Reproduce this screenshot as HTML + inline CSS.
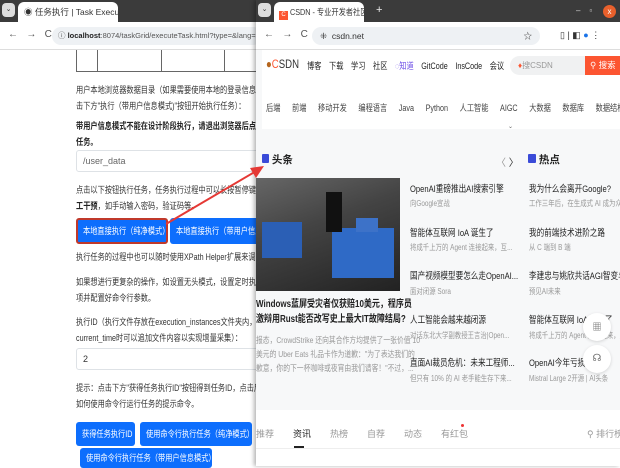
<!DOCTYPE html>
<html><head><meta charset="utf-8"><style>
*{margin:0;padding:0;box-sizing:border-box}
body{width:620px;height:466px;overflow:hidden;position:relative;background:#fff;font-family:"Liberation Sans","Noto Sans CJK SC",sans-serif;font-size:9px;color:#333}
.a{position:absolute;white-space:nowrap}
.s{transform:scaleX(.8);transform-origin:0 0}
.btn{position:absolute;background:#0d6efd;color:#fff;border-radius:3px;font-size:9px;line-height:24px;padding:0 6px;overflow:hidden;white-space:nowrap}
.btn span{display:inline-block;transform:scaleX(.8);transform-origin:0 50%}
.g{color:#999;font-size:8px}
.t{font-size:9.5px;color:#222}
</style></head><body>
<div class="a" style="left:0;top:0;width:260px;height:22px;background:#3b3b3b"></div>
<div class="a" style="left:2px;top:3px;width:13px;height:14px;background:#ddd;border-radius:4px;font-size:7px;text-align:center;line-height:14px">⌄</div>
<div class="a" style="left:18px;top:2px;width:100px;height:20px;background:#fff;border-radius:6px 6px 0 0;font-size:8.5px;line-height:20px;padding-left:6px;overflow:hidden">◉ 任务执行 | Task Executio&nbsp;×</div>
<div class="a" style="left:0;top:22px;width:260px;height:28px;background:#fff;border-bottom:1px solid #ddd"></div>
<div class="a" style="left:8px;top:29px;font-size:10px;color:#555">←&nbsp;&nbsp;&nbsp;→&nbsp;&nbsp;&nbsp;C</div>
<div class="a" style="left:52px;top:27px;width:210px;height:18px;background:#eef1f4;border-radius:9px;font-size:7.5px;line-height:18px;padding-left:6px;color:#555">ⓘ <b style="color:#222">localhost</b>:8074/taskGrid/executeTask.html?type=&amp;lang=zh&amp;id=324&amp;w</div>
<div class="a" style="left:76px;top:50px;width:190px;height:22px;border-left:1px solid #666;border-bottom:1px solid #666"></div>
<div class="a" style="left:97px;top:50px;width:1px;height:22px;background:#666"></div>
<div class="a" style="left:161px;top:50px;width:1px;height:22px;background:#666"></div>
<div class="a" style="left:224px;top:50px;width:1px;height:22px;background:#666"></div>
<div class="a s" style="left:76px;top:82px;line-height:16px">用户本地浏览器数据目录（如果需要使用本地的登录信息，请<br>击下方"执行（带用户信息模式)"按钮开始执行任务）：</div>
<div class="a s" style="left:76px;top:118px;line-height:16px;font-weight:bold;color:#222">带用户信息模式不能在设计阶段执行，请退出浏览器后点击"<br>任务。</div>
<div class="a" style="left:76px;top:150px;width:190px;height:22px;border:1px solid #dee2e6;border-radius:3px;font-size:9px;line-height:20px;padding-left:6px;color:#666">/user_data</div>
<div class="a s" style="left:76px;top:182px;line-height:16px">点击以下按钮执行任务，任务执行过程中可以长按暂停键（系<br><b style="color:#222">工干预</b>，如手动输入密码，验证码等。</div>
<div class="btn" style="left:76px;top:218px;width:92px;height:26px;border:2px solid #c0392b;line-height:22px;padding:0 5px"><span>本地直接执行（纯净模式）</span></div>
<div class="btn" style="left:170px;top:218px;width:90px;height:26px;line-height:26px"><span>本地直接执行（带用户信息</span></div>
<div class="a s" style="left:76px;top:250px">执行任务的过程中也可以随时使用XPath Helper扩展来调试XPath</div>
<div class="a s" style="left:76px;top:274px;line-height:16px">如果想进行更复杂的操作，如设置无头模式，设置定时执行等<br>项并配置好命令行参数。</div>
<div class="a s" style="left:76px;top:314px;line-height:16px">执行ID（执行文件存放在execution_instances文件夹内，提醒<br>current_time时可以追加文件内容以实现增量采集）：</div>
<div class="a" style="left:76px;top:348px;width:190px;height:22px;border:1px solid #dee2e6;border-radius:3px;font-size:9px;line-height:20px;padding-left:6px">2</div>
<div class="a s" style="left:76px;top:380px;line-height:16px">提示：点击下方"获得任务执行ID"按钮得到任务ID，点击后面<br>如何使用命令行运行任务的提示命令。</div>
<div class="btn" style="left:76px;top:422px;width:59px"><span>获得任务执行ID</span></div>
<div class="btn" style="left:140px;top:422px;width:112px"><span>使用命令行执行任务（纯净模式）</span></div>
<div class="btn" style="left:80px;top:448px;width:132px;height:20px;line-height:20px"><span>使用命令行执行任务（带用户信息模式）</span></div>
<div class="a" style="left:256px;top:0;width:364px;height:466px;background:#f7f8f9;box-shadow:-2px 0 4px rgba(0,0,0,.3)"></div>
<div class="a" style="left:256px;top:0;width:364px;height:22px;background:#3b3b3b"></div>
<div class="a" style="left:258px;top:3px;width:13px;height:14px;background:#ddd;border-radius:4px;font-size:7px;text-align:center;line-height:14px">⌄</div>
<div class="a" style="left:274px;top:2px;width:90px;height:20px;background:#fff;border-radius:6px 6px 0 0;font-size:8.5px;line-height:20px;padding-left:5px;overflow:hidden"><span style="display:inline-block;width:9px;height:9px;background:#fc5531;color:#fff;font-size:6px;line-height:9px;text-align:center;vertical-align:-1px">C</span> <span style="display:inline-block;transform:scaleX(.85);transform-origin:0 50%">CSDN - 专业开发者社区&nbsp;&nbsp;×</span></div>
<div class="a" style="left:376px;top:4px;color:#eee;font-size:11px">+</div>
<div class="a" style="left:576px;top:6px;color:#ddd;font-size:8px">–&nbsp;&nbsp;&nbsp;&nbsp;▫</div>
<div class="a" style="left:603px;top:5px;width:13px;height:13px;border-radius:50%;background:#e8602c;color:#fff;font-size:8px;text-align:center;line-height:13px">x</div>
<div class="a" style="left:256px;top:22px;width:364px;height:28px;background:#fff;border-bottom:1px solid #ddd"></div>
<div class="a" style="left:264px;top:29px;font-size:10px;color:#555">←&nbsp;&nbsp;&nbsp;→&nbsp;&nbsp;&nbsp;C</div>
<div class="a" style="left:312px;top:27px;width:228px;height:18px;background:#eef1f4;border-radius:9px;font-size:8.5px;line-height:18px;padding-left:8px;color:#333">⁜&nbsp; csdn.net<span style="float:right;padding-right:8px">☆</span></div>
<div class="a" style="left:560px;top:30px;font-size:9px;color:#333">▯&nbsp;|&nbsp;◧&nbsp;<span style="color:#1a73e8">●</span>&nbsp;⋮</div>
<div class="a" style="left:262px;top:50px;width:358px;height:30px;background:#fff"></div>
<div class="a s" style="left:266px;top:57px;font-size:12px"><span style="color:#b5651d">●</span><span style="color:#fc5531">C</span>SDN</div>
<div class="a s" style="left:307px;top:59px;font-size:9px;color:#222;word-spacing:7px">博客 下载 学习 社区 <span style="color:#6b4ce6">◌知道</span> GitCode InsCode 会议</div>
<div class="a" style="left:510px;top:56px;width:80px;height:19px;background:#f0f1f2;border-radius:10px 0 0 10px;font-size:8px;line-height:19px;padding-left:8px;color:#999"><span style="color:#fc5531">♦</span>搜CSDN</div>
<div class="a" style="left:585px;top:56px;width:35px;height:19px;background:#fc5531;color:#fff;font-size:8.5px;line-height:19px;padding-left:5px">⚲ 搜索</div>
<div class="a" style="left:262px;top:80px;width:358px;height:49px;background:#fff"></div>
<div class="a s" style="left:266px;top:101px;font-size:9px;color:#444;word-spacing:12px">后端 前端 移动开发 编程语言 Java Python 人工智能 AIGC 大数据 数据库 数据结构与</div>
<div class="a" style="left:508px;top:123px;font-size:6px;color:#666">⌄</div>
<div class="a" style="left:262px;top:152px;font-size:10.5px;font-weight:bold;color:#222"><span style="display:inline-block;width:7px;height:9px;background:#3a4bd8;border-radius:1px"></span> 头条</div>
<div class="a" style="left:496px;top:154px;font-size:10px;color:#999">〈 <span style="color:#333">〉</span></div>
<div class="a" style="left:528px;top:152px;font-size:10.5px;font-weight:bold;color:#222"><span style="display:inline-block;width:8px;height:9px;background:#3a4bd8;border-radius:1px"></span> 热点</div>
<div class="a" style="left:256px;top:178px;width:144px;height:113px;background:linear-gradient(160deg,#666 0%,#444 40%,#222 100%)"></div>
<div class="a" style="left:262px;top:222px;width:40px;height:36px;background:#2b5fb5"></div>
<div class="a" style="left:332px;top:228px;width:62px;height:50px;background:#2f6ac6"></div>
<div class="a" style="left:356px;top:218px;width:22px;height:14px;background:#3d72c8"></div>
<div class="a" style="left:326px;top:192px;width:16px;height:40px;background:#111"></div>
<div class="a s" style="left:256px;top:297px;line-height:15px;font-size:10px;font-weight:bold;color:#222">Windows蓝屏受灾者仅获赔10美元，程序员<br>激辩用Rust能否改写史上最大IT故障结局?</div>
<div class="a g s" style="left:256px;top:333px;line-height:14px;font-size:8.5px">报态，CrowdStrike 还向其合作方均提供了一张价值 10<br>美元的 Uber Eats 礼品卡作为道歉："为了表达我们的<br>歉意，你的下一杯咖啡或夜宵由我们请客！"不过，...</div>
<div class="a t s" style="left:410px;top:181px">OpenAI重磅推出AI搜索引擎</div><div class="a g s" style="left:410px;top:198px">向Google宣战</div>
<div class="a t s" style="left:410px;top:225px">智能体互联网 IoA 诞生了</div><div class="a g s" style="left:410px;top:242px">将成千上万的 Agent 连接起来，互...</div>
<div class="a t s" style="left:410px;top:268px">国产视频模型要怎么走OpenAI...</div><div class="a g s" style="left:410px;top:286px">面对闭源 Sora</div>
<div class="a t s" style="left:410px;top:312px">人工智能会越来越闭源</div><div class="a g s" style="left:410px;top:330px">对话东北大学副教授王言治|Open...</div>
<div class="a t s" style="left:410px;top:355px">直面AI裁员危机：未来工程师...</div><div class="a g s" style="left:410px;top:373px">但只有 10% 的 AI 老手能生存下来...</div>
<div class="a t s" style="left:529px;top:181px">我为什么会离开Google?</div><div class="a g s" style="left:529px;top:198px">工作三年后，在生成式 AI 成为众</div>
<div class="a t s" style="left:529px;top:225px">我的前端技术进阶之路</div><div class="a g s" style="left:529px;top:242px">从 C 端到 B 端</div>
<div class="a t s" style="left:529px;top:268px">李建忠与姚欣共话AGI智变与</div><div class="a g s" style="left:529px;top:286px">预见AI未来</div>
<div class="a t s" style="left:529px;top:312px">智能体互联网 IoA 诞生了</div><div class="a g s" style="left:529px;top:330px">将成千上万的 Agent 连接起来，互</div>
<div class="a t s" style="left:529px;top:355px">OpenAI今年亏损50</div><div class="a g s" style="left:529px;top:373px">Mistral Large 2开源 | AI头条</div>
<div class="a" style="left:583px;top:313px;width:28px;height:28px;border-radius:50%;background:#fff;box-shadow:0 1px 3px rgba(0,0,0,.15);font-size:9px;text-align:center;line-height:28px;color:#666">▦</div>
<div class="a" style="left:583px;top:345px;width:28px;height:28px;border-radius:50%;background:#fff;box-shadow:0 1px 3px rgba(0,0,0,.15);font-size:10px;text-align:center;line-height:28px;color:#666">☊</div>
<div class="a" style="left:256px;top:410px;width:364px;height:56px;background:#fff"></div>
<div class="a" style="left:256px;top:427px;font-size:9px;color:#999">推荐</div>
<div class="a" style="left:293px;top:427px;font-size:9px;color:#222">资讯</div>
<div class="a" style="left:330px;top:427px;font-size:9px;color:#999">热榜</div>
<div class="a" style="left:367px;top:427px;font-size:9px;color:#999">自荐</div>
<div class="a" style="left:404px;top:427px;font-size:9px;color:#999">动态</div>
<div class="a" style="left:441px;top:427px;font-size:9px;color:#999">有红包</div>
<div class="a" style="left:461px;top:424px;width:3px;height:3px;border-radius:50%;background:#e33"></div>
<div class="a" style="left:294px;top:446px;width:10px;height:2px;background:#222"></div>
<div class="a" style="left:587px;top:427px;font-size:9px;color:#999">⚲ 排行榜</div>
<div class="a" style="left:256px;top:448px;width:364px;height:1px;background:#eee"></div>
<svg class="a" style="left:0;top:0" width="620" height="466"><line x1="166" y1="224" x2="258" y2="170" stroke="#e53935" stroke-width="2"/><polygon points="264,166 250,168 256,178" fill="#e53935"/></svg>
</body></html>
